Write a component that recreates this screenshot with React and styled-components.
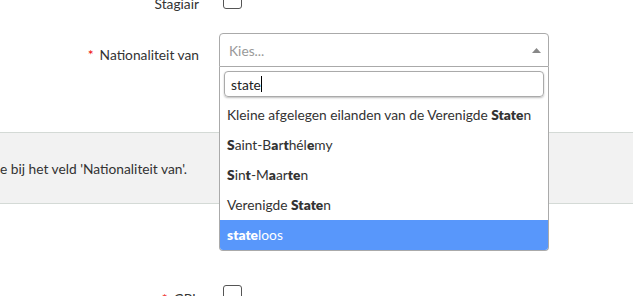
import React from 'react';
import styled, { createGlobalStyle } from 'styled-components';

const GlobalStyle = createGlobalStyle`
  html, body {
    margin: 0;
    padding: 0;
    background: #fff;
    overflow: hidden;
  }
  body {
    font-family: Lato, 'Open Sans', sans-serif;
    font-size: 13.75px;
    color: #333;
  }
`;

const Page = styled.div`
  width: 633px;
  height: 296px;
  overflow: hidden;
`;

const Form = styled.div`
  display: flex;
  flex-direction: column;
  margin-top: -18px;
`;

const Row = styled.div`
  display: flex;
  align-items: center;
  gap: 20px;
  min-height: 34px;
  margin-bottom: ${(p) => p.$after || 0}px;
`;

const Label = styled.div`
  width: 199px;
  padding-top: 8px;
  text-align: right;
  color: #333;
  flex-shrink: 0;
`;

const Required = styled.span`
  color: #e00;
  margin-right: 6px;
`;

const Checkbox = styled.span`
  display: block;
  width: 17px;
  height: 17px;
  margin-left: 4px;
  border: 1px solid #555;
  border-radius: 3px;
  background: #fff;
`;

const SelectWrap = styled.div`
  position: relative;
  width: 330px;
`;

const SelectBox = styled.div`
  box-sizing: border-box;
  height: 34px;
  border: 1px solid #aaa;
  border-radius: 4px 4px 0 0;
  display: flex;
  align-items: center;
  justify-content: space-between;
  padding: 0 7px 0 9px;
`;

const Placeholder = styled.span`
  color: #999;
`;

const Dropdown = styled.div`
  position: absolute;
  top: 100%;
  left: 0;
  right: 0;
  box-sizing: border-box;
  background: #fff;
  border: 1px solid #aaa;
  border-top: none;
  border-radius: 0 0 4px 4px;
  overflow: hidden;
  z-index: 10;
`;

const Search = styled.div`
  box-sizing: border-box;
  height: 26px;
  margin: 4px 4px 3px;
  border: 1px solid #aaa;
  border-radius: 4px;
  box-shadow: 0 1px 2px rgba(0, 0, 0, 0.25);
  display: flex;
  align-items: center;
  padding: 0 6px;
  color: #222;
`;

const Caret = styled.span`
  display: inline-block;
  width: 1px;
  height: 16px;
  background: #000;
`;

const Option = styled.div`
  height: 30px;
  line-height: 30px;
  padding: 0 7px;
  white-space: pre;
  color: ${(p) => (p.$active ? '#fff' : '#333')};
  background: ${(p) => (p.$active ? '#5897fb' : '#fff')};

  b {
    font-weight: 800;
  }
`;

const Band = styled.div`
  height: 70px;
  background: #f2f2f2;
  border-top: 1px solid #d4dad6;
  border-bottom: 1px solid #d4dad6;
  display: flex;
  align-items: center;
  white-space: nowrap;
  margin-bottom: 73px;
`;

const Arrow = () => (
  <svg width='9' height='5' viewBox='0 0 9 5'>
    <path d='M0 5 L4.5 0 L9 5 Z' fill='#888' />
  </svg>
);

const options = [
  [['Kleine afgelegen eilanden van de Verenigde ', false], ['State', true], ['n', false]],
  [['S', true], ['aint-B', false], ['a', true], ['r', false], ['t', true], ['hél', false], ['e', true], ['my', false]],
  [['S', true], ['in', false], ['t', true], ['-M', false], ['a', true], ['ar', false], ['te', true], ['n', false]],
  [['Verenigde ', false], ['State', true], ['n', false]],
  [['state', true], ['loos', false]],
];

const App = () => (
  <Page>
    <GlobalStyle />
    <Form>
      <Row $after={17}>
        <Label>Stagiair</Label>
        <Checkbox />
      </Row>
      <Row $after={65}>
        <Label>
          <Required>*</Required>Nationaliteit van
        </Label>
        <SelectWrap>
          <SelectBox>
            <Placeholder>Kies...</Placeholder>
            <Arrow />
          </SelectBox>
          <Dropdown>
            <Search>
              state
              <Caret />
            </Search>
            {options.map((parts, i) => (
              <Option key={i} $active={i === options.length - 1}>
                {parts.map(([t, bold], j) =>
                  bold ? <b key={j}>{t}</b> : <span key={j}>{t}</span>,
                )}
              </Option>
            ))}
          </Dropdown>
        </SelectWrap>
      </Row>
      <Band>e bij het veld 'Nationaliteit van'.</Band>
      <Row>
        <Label>
          <Required>*</Required>GPL
        </Label>
        <Checkbox />
      </Row>
    </Form>
  </Page>
);

export default App;
